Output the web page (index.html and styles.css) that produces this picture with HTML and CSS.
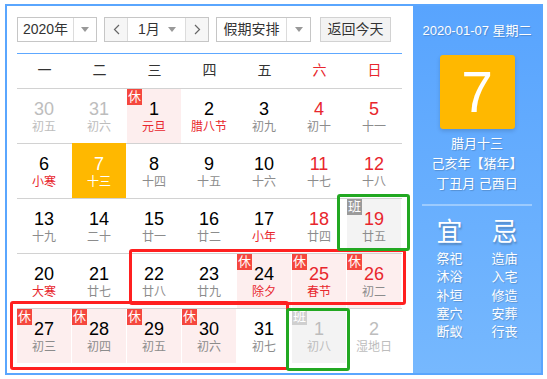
FILE: index.html
```html
<!DOCTYPE html>
<html lang="zh-CN">

<head>
  <meta charset="UTF-8">
  <meta name="viewport" content="width=device-width, initial-scale=1.0">
  <title>万年历</title>
  <link rel="stylesheet" href="styles.css">
</head>

<body>
  <div class="calendar">
    <div class="main">
      <!-- 工具栏 -->
      <div class="toolbar">
        <div class="select year">
          <span class="val">2020年</span>
          <span class="arrow"><i class="tri"></i></span>
        </div>
        <div class="select month">
          <span class="btn prev"><svg width="7" height="11" viewBox="0 0 7 11"><polyline points="6,1 1.5,5.5 6,10" fill="none" stroke="#666" stroke-width="1.2"/></svg></span>
          <span class="mval">1月<i class="tri"></i></span>
          <span class="btn next"><svg width="7" height="11" viewBox="0 0 7 11"><polyline points="1,1 5.5,5.5 1,10" fill="none" stroke="#666" stroke-width="1.2"/></svg></span>
        </div>
        <div class="select holiday">
          <span class="val">假期安排</span>
          <span class="arrow"><i class="tri"></i></span>
        </div>
        <div class="today-btn">返回今天</div>
      </div>
      <!-- 星期 -->
      <div class="week">
        <span>一</span><span>二</span><span>三</span><span>四</span><span>五</span>
        <span class="red">六</span><span class="red">日</span>
      </div>
      <!-- 日期 -->
      <div class="days">
        <div class="row">
          <div class="cell other"><p class="num">30</p><p class="lunar">初五</p></div>
          <div class="cell other"><p class="num">31</p><p class="lunar">初六</p></div>
          <div class="cell rest"><i class="tag">休</i><p class="num">1</p><p class="lunar red">元旦</p></div>
          <div class="cell"><p class="num">2</p><p class="lunar red">腊八节</p></div>
          <div class="cell"><p class="num">3</p><p class="lunar">初九</p></div>
          <div class="cell weekend"><p class="num">4</p><p class="lunar">初十</p></div>
          <div class="cell weekend"><p class="num">5</p><p class="lunar">十一</p></div>
        </div>
        <div class="row">
          <div class="cell"><p class="num">6</p><p class="lunar red">小寒</p></div>
          <div class="cell today"><p class="num">7</p><p class="lunar">十三</p></div>
          <div class="cell"><p class="num">8</p><p class="lunar">十四</p></div>
          <div class="cell"><p class="num">9</p><p class="lunar">十五</p></div>
          <div class="cell"><p class="num">10</p><p class="lunar">十六</p></div>
          <div class="cell weekend"><p class="num">11</p><p class="lunar">十七</p></div>
          <div class="cell weekend"><p class="num">12</p><p class="lunar">十八</p></div>
        </div>
        <div class="row">
          <div class="cell"><p class="num">13</p><p class="lunar">十九</p></div>
          <div class="cell"><p class="num">14</p><p class="lunar">二十</p></div>
          <div class="cell"><p class="num">15</p><p class="lunar">廿一</p></div>
          <div class="cell"><p class="num">16</p><p class="lunar">廿二</p></div>
          <div class="cell"><p class="num">17</p><p class="lunar red">小年</p></div>
          <div class="cell weekend"><p class="num">18</p><p class="lunar">廿四</p></div>
          <div class="cell weekend work"><i class="tag">班</i><p class="num">19</p><p class="lunar">廿五</p></div>
        </div>
        <div class="row">
          <div class="cell"><p class="num">20</p><p class="lunar red">大寒</p></div>
          <div class="cell"><p class="num">21</p><p class="lunar">廿七</p></div>
          <div class="cell"><p class="num">22</p><p class="lunar">廿八</p></div>
          <div class="cell"><p class="num">23</p><p class="lunar">廿九</p></div>
          <div class="cell rest"><i class="tag">休</i><p class="num">24</p><p class="lunar red">除夕</p></div>
          <div class="cell weekend rest"><i class="tag">休</i><p class="num">25</p><p class="lunar red">春节</p></div>
          <div class="cell weekend rest"><i class="tag">休</i><p class="num">26</p><p class="lunar">初二</p></div>
        </div>
        <div class="row">
          <div class="cell rest"><i class="tag">休</i><p class="num">27</p><p class="lunar">初三</p></div>
          <div class="cell rest"><i class="tag">休</i><p class="num">28</p><p class="lunar">初四</p></div>
          <div class="cell rest"><i class="tag">休</i><p class="num">29</p><p class="lunar">初五</p></div>
          <div class="cell rest"><i class="tag">休</i><p class="num">30</p><p class="lunar">初六</p></div>
          <div class="cell"><p class="num">31</p><p class="lunar">初七</p></div>
          <div class="cell other work"><i class="tag">班</i><p class="num">1</p><p class="lunar">初八</p></div>
          <div class="cell other"><p class="num">2</p><p class="lunar">湿地日</p></div>
        </div>
      </div>
    </div>
    <!-- 右侧详情 -->
    <div class="side">
      <p class="date">2020-01-07 星期二</p>
      <div class="big-day">7</div>
      <p class="info">腊月十三</p>
      <p class="info">己亥年【猪年】</p>
      <p class="info">丁丑月 己酉日</p>
      <div class="line"></div>
      <div class="yiji">
        <div class="col">
          <h3>宜</h3>
          <p>祭祀</p><p>沐浴</p><p>补垣</p><p>塞穴</p><p>断蚁</p>
        </div>
        <div class="col">
          <h3>忌</h3>
          <p>造庙</p><p>入宅</p><p>修造</p><p>安葬</p><p>行丧</p>
        </div>
      </div>
    </div>
  </div>

  <!-- 标注框 -->
  <div class="mark red-mark m1"></div>
  <div class="mark red-mark m2"></div>
  <div class="mark green-mark m3"></div>
  <div class="mark green-mark m4"></div>
</body>

</html>
```

FILE: styles.css
```css
* {
  margin: 0;
  padding: 0
}

body {
  font-family: "Liberation Sans", "Noto Sans CJK SC", sans-serif;
  color: #333;
  background: #fff;
}

i {
  font-style: normal
}

.calendar {
  width: 538px;
  height: 371px;
  margin: 4px 0 0 5px;
  border: 2px solid #5aa6fe;
  box-sizing: border-box;
  display: flex;
}

.main {
  width: 406px;
  padding: 11px 0 0 10px;
  box-sizing: border-box;
}

/* 工具栏 */
.toolbar {
  display: flex;
  height: 25px;
  margin-bottom: 11px;
  font-size: 14px;
}

.select {
  display: flex;
  height: 25px;
  border: 1px solid #c6c6c6;
  box-sizing: border-box;
  background: #fff;
}

.select .val {
  text-align: center;
  line-height: 23px;
  border-right: 1px solid #dcdcdc;
}

.select .arrow {
  flex: 1;
  display: flex;
  align-items: center;
  justify-content: center;
}

.tri {
  display: inline-block;
  width: 0;
  height: 0;
  border-top: 5px solid #999;
  border-left: 4px solid transparent;
  border-right: 4px solid transparent;
}

.year {
  width: 80px;
}

.year .val {
  width: 55px;
}

.month {
  width: 105px;
  margin-left: 7px;
}

.month .btn {
  width: 22px;
  background: #f6f6f6;
  display: flex;
  align-items: center;
  justify-content: center;
}

.month .prev {
  border-right: 1px solid #dcdcdc;
}

.month .next {
  border-left: 1px solid #dcdcdc;
}

.month .mval {
  flex: 1;
  display: flex;
  align-items: center;
  justify-content: space-between;
  padding: 0 9px 0 10px;
  line-height: 23px;
}

.holiday {
  width: 95px;
  margin-left: 7px;
}

.holiday .val {
  width: 69px;
}

.today-btn {
  width: 71px;
  height: 25px;
  margin-left: 9px;
  border: 1px solid #d2d2d2;
  box-sizing: border-box;
  background: #f3f3f3;
  text-align: center;
  line-height: 23px;
}

/* 星期 */
.week {
  width: 385px;
  display: grid;
  grid-template-columns: repeat(7, 55px);
  border-top: 1px solid #5ea8ff;
  height: 34px;
  line-height: 33px;
  font-size: 14px;
  text-align: center;
}

.red {
  color: #e8262d !important;
}

/* 日期 */
.row {
  width: 385px;
  height: 55px;
  box-sizing: border-box;
  border-top: 1px solid #d2d2d2;
  display: grid;
  grid-template-columns: repeat(7, 54px);
  column-gap: 1px;
}

.cell {
  position: relative;
  height: 54px;
  text-align: center;
}

.num {
  padding-top: 10px;
  font-size: 18px;
  line-height: 20px;
  color: #000;
}

.lunar {
  font-size: 12px;
  line-height: 16px;
  color: #8c8c8c;
}

.weekend .num {
  color: #e8262d;
}

.other .num,
.other .lunar {
  color: #bdbdbd;
}

.rest {
  background: #fdeeee;
}

.work {
  background: #f3f3f3;
}

.today {
  background: #ffb800;
  margin-top: -1px;
  height: 55px;
}

.today .num {
  padding-top: 11px;
}

.today .num,
.today .lunar {
  color: #fff;
}

.tag {
  position: absolute;
  top: 0;
  left: 0;
  width: 15px;
  height: 16px;
  font-size: 13px;
  line-height: 16px;
  color: #fff;
  background: #f5473e;
}

.work .tag {
  background: #9a9a9a;
}

.other.work .tag {
  background: #cfcfcf;
}

/* 右侧 */
.side {
  flex: 1;
  background: linear-gradient(#58a4fe, #76b8fe);
  color: #fff;
  text-align: center;
  text-shadow: 1px 1px 1px rgba(0, 0, 0, .18);
}

.date {
  padding-top: 15px;
  font-size: 13px;
  line-height: 20px;
}

.big-day {
  width: 75px;
  height: 74px;
  margin: 14px auto 5px;
  background: #ffb800;
  border-radius: 3px;
  box-shadow: 0 2px 4px rgba(0, 0, 0, .15);
  font-size: 57px;
  line-height: 74px;
  text-shadow: none;
}

.info {
  font-size: 13px;
  line-height: 20px;
}

.line {
  width: 110px;
  height: 2px;
  margin: 10px auto 0;
  background: rgba(255, 255, 255, .35);
}

.yiji {
  display: flex;
  justify-content: center;
  margin-top: 11px;
}

.yiji .col {
  width: 55px;
}

.yiji h3 {
  font-size: 26px;
  font-weight: normal;
  line-height: 30px;
  margin-bottom: 3px;
  text-shadow: 1px 2px 2px rgba(0, 0, 0, .25);
}

.yiji p {
  font-size: 13px;
  line-height: 18.3px;
}

/* 标注框 */
.mark {
  position: absolute;
  box-sizing: border-box;
  border: 3px solid;
  border-radius: 3px;
}

.red-mark {
  border-color: #ff2020;
}

.green-mark {
  border-color: #22a822;
}

.m1 {
  left: 129px;
  top: 249px;
  width: 277px;
  height: 56px;
}

.m2 {
  left: 10px;
  top: 301px;
  width: 279px;
  height: 69px;
}

.m3 {
  left: 337px;
  top: 194px;
  width: 73px;
  height: 57px;
}

.m4 {
  left: 286px;
  top: 308px;
  width: 64px;
  height: 63px;
}
```
